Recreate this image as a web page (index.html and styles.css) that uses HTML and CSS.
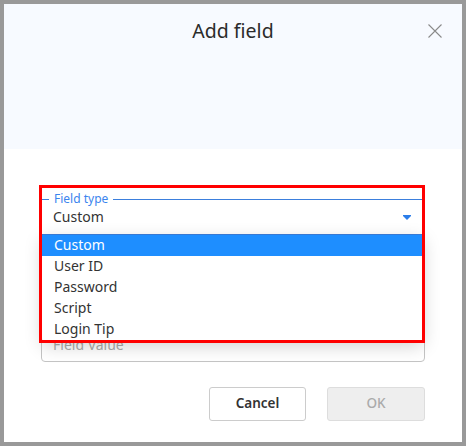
FILE: index.html
```html
<!DOCTYPE html>
<html>
<head>
<meta charset="utf-8">
<link rel="stylesheet" href="styles.css">
</head>
<body>
<div class="dialog">
  <div class="header">
    <div class="title">Add field</div>
    <svg class="close" width="14" height="14" viewBox="0 0 14 14"><path d="M0.5 0.5L13.5 13.5M13.5 0.5L0.5 13.5" stroke="#8a8a8a" stroke-width="1.1" fill="none"/></svg>
  </div>
  <div class="content">
    <div class="field">
      <fieldset class="select">
        <legend>Field type</legend>
        <div class="value-row">
          <span>Custom</span>
          <svg class="arrow" width="8" height="5" viewBox="0 0 8 5"><path d="M0 0H8V1L4 5L0 1Z" fill="#2b7de9"/></svg>
        </div>
      </fieldset>
      <ul class="menu">
        <li class="item active">Custom</li>
        <li class="item">User ID</li>
        <li class="item">Password</li>
        <li class="item">Script</li>
        <li class="item">Login Tip</li>
      </ul>
      <div class="annot"></div>
    </div>
    <div class="input"><span class="placeholder">Field Value</span></div>
    <div class="actions">
      <button class="btn cancel">Cancel</button>
      <button class="btn ok">OK</button>
    </div>
  </div>
</div>
</body>
</html>
```

FILE: styles.css
```css
* { box-sizing: border-box; }
body {
  margin: 0;
  width: 466px;
  height: 446px;
  font-family: "Noto Sans", "Open Sans", sans-serif;
  color: #333;
}
.dialog {
  width: 466px;
  height: 446px;
  border: 4px solid #999;
  background: #fff;
  display: flex;
  flex-direction: column;
}
.header {
  position: relative;
  height: 145px;
  background: #f7faff;
  padding-top: 15px;
}
.title {
  text-align: center;
  font-size: 19.5px;
  line-height: 24px;
  color: #2b2b2b;
}
.close {
  position: absolute;
  right: 20px;
  top: 20px;
}
.content {
  padding: 42px 37px 0 37px;
  display: flex;
  flex-direction: column;
}
.field {
  position: relative;
  z-index: 2;
}
.select {
  margin: 0;
  width: 384px;
  border: 1px solid #3b7fdd;
  padding: 0 13px 7px 7px;
}
.select legend {
  padding: 0 5px;
  font-size: 12px;
  line-height: 16px;
  color: #3b84ee;
}
.value-row {
  display: flex;
  justify-content: space-between;
  align-items: center;
  height: 20px;
  padding-left: 4px;
  font-size: 14px;
  line-height: 18px;
  color: #333;
}
.arrow { display: block; margin-top: 1px; }
.menu {
  position: absolute;
  left: 1px;
  top: 44px;
  width: 381px;
  height: 106px;
  margin: 0;
  padding: 0;
  list-style: none;
  background: #fff;
  border-radius: 0 0 4px 4px;
  box-shadow: 0 5px 18px rgba(0,0,0,0.18);
}
.item {
  height: 21px;
  line-height: 20px;
  padding-left: 12px;
  font-size: 14px;
  color: #333;
}
.item.active {
  background: #1e8eff;
  color: #fff;
}
.annot {
  position: absolute;
  left: -2px;
  top: -6px;
  width: 386px;
  height: 158px;
  border: 3px solid #ff0000;
}
.input {
  margin-top: 91px;
  width: 384px;
  height: 36px;
  border: 1px solid #c4c4c4;
  border-radius: 4px;
  padding-left: 11px;
  display: flex;
  align-items: center;
  font-size: 14px;
}
.placeholder { color: #aaa; }
.actions {
  margin-top: 25px;
  display: flex;
  justify-content: flex-end;
  gap: 21px;
}
.btn {
  width: 97px;
  height: 34px;
  border-radius: 3px;
  font-family: "Noto Sans", "Open Sans", sans-serif;
  font-size: 13.5px;
  line-height: 18px;
  padding-bottom: 3px;
  font-weight: 600;
}
.cancel {
  background: #fff;
  border: 1px solid #ccc;
  color: #333;
}
.ok {
  width: 98px;
  background: #eee;
  border: 1px solid #ddd;
  color: #aaa;
  font-weight: 500;
}
```
